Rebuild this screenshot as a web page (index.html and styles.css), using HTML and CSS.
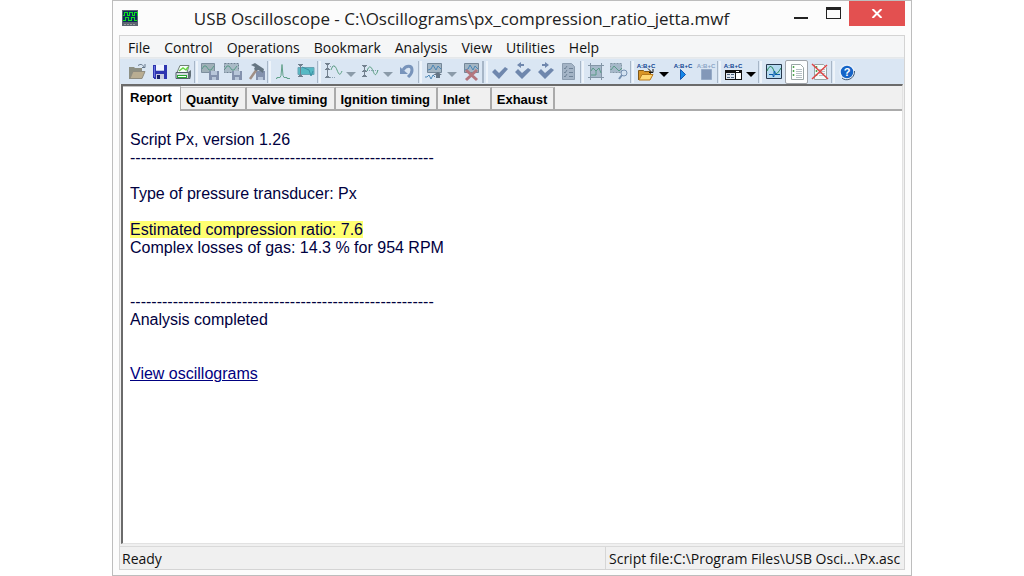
FILE: index.html
```html
<!DOCTYPE html>
<html lang="en">
<head>
<meta charset="utf-8">
<title>USB Oscilloscope</title>
<link rel="stylesheet" href="styles.css">
</head>
<body>
<div class="window">
  <header class="titlebar">
    <svg class="app-icon" width="16" height="16" viewBox="0 0 16 16" shape-rendering="crispEdges"><path fill="#5c6470" d="M0 0h16v16H0z"/><path fill="#0c2c58" d="M1 1h14v11H1z"/><path fill="none" stroke="#10e020" d="M1 5.500h1v-3h3v3h2v-3h3v3h2v-3h3v3M1 10.500h2v-3h3v3h3v-3h3v3h3"/><path stroke="#98a0a0" stroke-dasharray="2 1" d="M2 14.500h12"/></svg>
    <h1 class="title">USB Oscilloscope - C:\Oscillograms\px_compression_ratio_jetta.mwf</h1>
    <div class="controls">
      <button class="ctl" aria-label="Minimize"><svg width="14" height="12" viewBox="0 0 14 12"><path fill="#222" d="M0 10h14v2H0z"/></svg></button>
      <button class="ctl ctl-max" aria-label="Maximize"><svg width="15" height="12" viewBox="0 0 15 12"><path fill="#222" fill-rule="evenodd" d="M0 0h15v12H0zM1 3v8h13V3z"/></svg></button>
      <button class="ctl close" aria-label="Close"><svg width="12" height="9" viewBox="0 0 12 9"><path stroke="#fff" stroke-width="2" d="M1.500 0l9 9M10.500 0l-9 9"/></svg></button>
    </div>
  </header>
  <div class="client">
    <nav class="menu">
      <button>File</button><button>Control</button><button>Operations</button><button>Bookmark</button><button>Analysis</button><button>View</button><button>Utilities</button><button>Help</button>
    </nav>
    <div class="toolbar" role="toolbar">
      <button class="tool" aria-label="Open"><svg viewBox="0 0 18 20"><path fill="#8d8f83" d="M1 5h5l1 1h7v4H5l-3 7H1z"/><path fill="#b9ad92" stroke="#8f8c80" d="M5 9.500h12l-3 7H2z"/><path fill="none" stroke="#66788c" d="M10 3.500c3-2 5-1 6 2M14 5.500h3V2"/></svg></button>
      <button class="tool" aria-label="Save"><svg viewBox="0 0 18 20" shape-rendering="crispEdges"><path fill="#2d35b0" d="M2 3h14v14H3l-1-1z"/><path fill="#6874e0" d="M3 4h1v11H3z"/><path fill="#f0f4ff" d="M5 3h8v6H5z"/><path fill="#b8c4e8" d="M5 8h8v1H5z"/><path fill="#c8cce0" d="M5 12h8v5H5z"/><path fill="#16206c" d="M6 13h3v4H6z"/></svg></button>
      <button class="tool" aria-label="Print"><svg viewBox="0 0 18 20"><path fill="#f8fffa" stroke="#718078" d="M6 3.500h9l-2 7H3z"/><path stroke="#69d544" stroke-width="1.500" fill="none" d="M5 9l4-3 3 2 2-3"/><path fill="#d5dce0" stroke="#536068" d="M2 10.500h14v6H2z"/><path fill="#27a82f" d="M3 13h10v3H3z"/><path fill="#fff" d="M4 14h8v1H4z"/><path fill="#627078" d="M14 10l3-2v6l-2 3h-1z"/></svg></button>
      <span class="sep"></span>
      <button class="tool" aria-label="Save graph"><svg viewBox="0 0 18 20"><path fill="#9fb0b8" stroke="#7d8f9e" d="M.5 1.500h13v9H.5z"/><path fill="none" stroke="#5a9b88" d="M1 7l2-3h2l3 4h2l3-4"/><path fill="#8492ad" d="M8 9h10v9H8z"/><path fill="#b8c6d9" d="M10 9h6v4h-6zM11 15h4v3h-4z"/></svg></button>
      <button class="tool" aria-label="Save selection"><svg viewBox="0 0 18 20"><path fill="#a9bac6" stroke="#6e8090" stroke-dasharray="2 1" d="M.5 1.500h14v9H.5z"/><path fill="none" stroke="#5a9b88" d="M1 7l2-3h2l3 4h2l3-4"/><path fill="#8492ad" d="M8 9h10v9H8z"/><path fill="#b8c6d9" d="M10 9h6v4h-6zM11 15h4v3h-4z"/></svg></button>
      <button class="tool" aria-label="Build"><svg viewBox="0 0 18 20"><path fill="#8492ad" d="M9 9h9v9H9z"/><path fill="#b8c6d9" d="M11 15h5v3h-5z"/><path stroke="#a08f85" stroke-width="2.500" d="M10 7l-7 10"/><path fill="#657582" d="M4 3l4-2 9 6-1 4-3-2-2-1-2 1-2-2 1-2z"/></svg></button>
      <span class="sep"></span>
      <button class="tool" aria-label="Peak"><svg viewBox="0 0 18 20"><path fill="none" stroke="#63a28c" d="M2 16.500h1v-1h3l1-2 1-11 1 11 1 2h3v1h3"/></svg></button>
      <button class="tool" aria-label="Levels"><svg viewBox="0 0 18 20"><path fill="#56b9c4" stroke="#6aa3b4" d="M1 5.500h16v7H1z"/><path fill="none" stroke="#3b92a4" d="M5 5l7 3 2 6 2-5"/><path stroke="#70808e" d="M3.500 2v13M1 2.500h5M1 14.500h5M2 3.500h3M2 13.500h3"/></svg></button>
      <span class="sep"></span>
      <button class="tool" aria-label="Vertical zoom"><svg viewBox="0 0 18 20"><path stroke="#73818f" d="M3.500 1v15M1 1.500h5M1 7.500h5M1 15.500h5M2 2.500h3M2 6.500h3M2 14.500h3"/><path stroke="#8ba2b3" stroke-dasharray="1 1" d="M6 4.500h5M6 15.500h5"/><path fill="none" stroke="#5ba083" d="M7 8c2-6 4-5 6 0s3 6 5 1"/></svg></button>
      <button class="drop" aria-label="Vertical zoom options"></button>
      <button class="tool" aria-label="Offset"><svg viewBox="0 0 18 20"><path stroke="#73818f" d="M3.500 3v12M1 3.500h5M1 9.500h5M1 14.500h5M2 4.500h3M2 8.500h3M2 13.500h3"/><path stroke="#8ba2b3" stroke-dasharray="1 1" d="M6 8.500h12"/><path fill="none" stroke="#5ba083" d="M6 9c2-6 4-5 6 0s3 5 5-1"/></svg></button>
      <button class="drop" aria-label="Offset options"></button>
      <button class="tool" aria-label="Undo"><svg viewBox="0 0 18 20"><path fill="none" stroke="#7894bb" stroke-width="3" d="M5 8c3-5 9-5 9 0 0 4-2 5-4 7"/><path fill="#7894bb" d="M2 5v7h8z"/></svg></button>
      <span class="sep"></span>
      <button class="tool" aria-label="Add marker"><svg viewBox="0 0 18 20"><path fill="#a3b5c3" stroke="#748798" d="M2.500 1.500h14v9h-14z"/><path fill="none" stroke="#4b86b5" d="M3 8l3-1 2-4 3 5 2-4 3 3M0 15h2l2-2 2 4 2-4 2 2"/><path fill="#647484" d="M8 13l5-3 4 3h-2v3h-4v-3z"/></svg></button>
      <button class="drop" aria-label="Marker options"></button>
      <button class="tool" aria-label="Delete marker"><svg viewBox="0 0 18 20"><path fill="#a3b5c3" stroke="#748798" d="M2.500 1.500h14v9h-14z"/><path fill="none" stroke="#4b86b5" d="M3 8l3-1 2-4 3 5 2-4 3 3"/><path stroke="#b3767e" stroke-width="3" d="M4 8l11 10M15 8L4 18"/></svg></button>
      <span class="sep band"></span>
      <button class="tool" aria-label="Check"><svg viewBox="0 0 18 20"><path fill="#6f87ad" d="M1 10l3-3 4 4 6-6 3 2-9 10z"/></svg></button>
      <button class="tool" aria-label="Previous check"><svg viewBox="0 0 18 20"><path fill="#6f87ad" d="M1 10l3-3 4 4 6-5 3 2-9 9zM3 3l4-3v2h3v2H7v2z"/></svg></button>
      <button class="tool" aria-label="Next check"><svg viewBox="0 0 18 20"><path fill="#6f87ad" d="M1 10l3-3 4 4 6-5 3 2-9 9zM12 3L8 0v2H5v2h3v2z"/></svg></button>
      <button class="tool" aria-label="Check list"><svg viewBox="0 0 18 20"><path fill="#a4b4c6" stroke="#8c9db0" d="M2.500 1.500h9l3 3v13h-12z"/><path fill="none" stroke="#6f8398" d="M4 6l1 1 2-3M4 10l1 1 2-3M4 14l1 1 2-3M9 6.500h4M9 10.500h4M9 14.500h4"/></svg></button>
      <span class="sep"></span>
      <button class="tool" aria-label="Fit view"><svg viewBox="0 0 18 20"><path fill="#a5b8c9" stroke="#8396a7" d="M3.500 3.500h11v12h-11z"/><path stroke="#8396a7" fill="none" d="M1 3.500h16M1 15.500h16M3.500 1v17M14.500 1v17"/><path fill="none" stroke="#5a9b88" d="M4 9l2-3 3 3 3-3 2 5M4 13h5V9"/></svg></button>
      <button class="tool" aria-label="Find"><svg viewBox="0 0 18 20"><path fill="#a5b8c9" stroke="#8396a7" stroke-dasharray="2 1" d="M.5 1.500h11v9H.5z"/><path fill="none" stroke="#5a9b88" d="M1 8l3-4 3 3 2 2 3-3"/><circle cx="14" cy="11" r="3" fill="#d3e2f1" stroke="#7690b0"/><path stroke="#7690b0" stroke-width="2" d="M12 13l-3 4"/></svg></button>
      <span class="sep"></span>
      <button class="tool" aria-label="Open script"><svg viewBox="0 0 18 20"><text class="abc" x="9" y="6" text-anchor="middle">A:B+C</text><path fill="#d99526" stroke="#805818" d="M1.500 18V8.500h5l1 1h6v3"/><path fill="#ffd875" stroke="#b8791c" d="M5 12.500h11l-3 5.500H2z"/><path fill="none" stroke="#111" d="M11 6.500l4 4M12 10.500h4V7"/></svg></button>
      <button class="drop dark" aria-label="Open script options"></button>
      <button class="tool" aria-label="Run script"><svg viewBox="0 0 18 20"><text class="abc" x="9" y="6" text-anchor="middle">A:B+C</text><path fill="#1587e8" stroke="#1558b0" d="M6.500 7.500v10l5-5z"/></svg></button>
      <button class="tool" aria-label="Stop script"><svg viewBox="0 0 18 20"><text class="abc off" x="9" y="6" text-anchor="middle">A:B+C</text><path fill="#8398b8" stroke="#96abc7" d="M4.500 7.500h10v10h-10z"/></svg></button>
      <span class="sep"></span>
      <button class="tool" aria-label="Script window"><svg viewBox="0 0 18 20"><text class="abc" x="9" y="6" text-anchor="middle">A:B+C</text><g shape-rendering="crispEdges"><path fill="#111" d="M1 8h17v10H1z"/><path fill="#dfe6ee" d="M2 11h9v6H2z"/><path fill="#fff" d="M12 11h5v6h-5z"/><path fill="#4d6480" d="M3 12h3v1H3zM7 12h3v1H7zM3 15h3v1H3zM7 15h3v1H7z"/><path fill="#fff" d="M12 9h3v1h-3z"/></g></svg></button>
      <button class="drop dark" aria-label="Script window options"></button>
      <span class="sep"></span>
      <button class="tool" aria-label="Oscillogram"><svg viewBox="0 0 18 20"><path fill="#b5daf0" stroke="#26374d" d="M1.500 2.500h15v14h-15z"/><path fill="none" stroke="#238653" d="M2 9c3-7 5-5 7 0s4 2 7-3"/><path fill="none" stroke="#075cad" d="M4 12.500h4v2h1v-5h1v3h5"/></svg></button>
      <button class="tool pressed" aria-label="Report" aria-pressed="true"><svg viewBox="0 0 18 20"><path fill="#fff" stroke="#9aa6a6" d="M3.500 2.500h9l3 3v12h-12z"/><path stroke="#4fa650" stroke-width="1.500" stroke-dasharray="2 2" d="M5.500 4v12"/><path stroke="#b7c1c5" d="M8 7.500h6M8 9.500h6M8 11.500h6M8 13.500h6M8 15.500h6"/></svg></button>
      <button class="tool" aria-label="Delete report"><svg viewBox="0 0 18 20"><path fill="#f5fafa" stroke="#9aa6a6" d="M3.500 2.500h9l3 3v12h-12z"/><path stroke="#4fa650" stroke-width="1.500" stroke-dasharray="2 2" d="M5.500 4v12"/><path stroke="#b7c1c5" d="M8 7.500h6M8 9.500h6M8 11.500h6M8 13.500h6"/><path stroke="#df4545" stroke-width="1.500" d="M1 2l16 15M16 3L1 17"/></svg></button>
      <span class="sep"></span>
      <button class="tool" aria-label="Help"><svg viewBox="0 0 18 20"><circle cx="9" cy="10" r="7" fill="#1564c7" stroke="#e9f1fa" stroke-width="1.500"/><path fill="none" stroke="#3c5876" d="M4 16c4 4 13 1 12.500-7"/><text class="question" x="9" y="14" text-anchor="middle">?</text></svg></button>
    </div>
    <main class="pane">
      <div class="tabs" role="tablist">
        <button class="tab active" role="tab" aria-selected="true">Report</button>
        <button class="tab" role="tab">Quantity</button>
        <button class="tab" role="tab">Valve timing</button>
        <button class="tab" role="tab">Ignition timing</button>
        <button class="tab inlet" role="tab">Inlet</button>
        <button class="tab" role="tab">Exhaust</button>
      </div>
      <div class="report">
        <p>Script Px, version 1.26</p>
        <p>---------------------------------------------------------</p>
        <p class="gap">Type of pressure transducer: Px</p>
        <p class="gap"><mark>Estimated compression ratio: 7.6</mark></p>
        <p>Complex losses of gas: 14.3 % for 954 RPM</p>
        <p class="gap-wide">---------------------------------------------------------</p>
        <p>Analysis completed</p>
        <p class="gap-wide"><a href="#">View oscillograms</a></p>
      </div>
    </main>
    <footer class="status">
      <span class="ready">Ready</span>
      <span class="script">Script file:C:\Program Files\USB Osci...\Px.asc</span>
    </footer>
  </div>
</div>
</body>
</html>
```
FILE: styles.css
```css
* { box-sizing: border-box; }
body { margin: 0; background: #fff; font-family: "Open Sans", "Noto Sans", sans-serif; color: #111; }
button { border: 0; padding: 0; background: none; font: inherit; color: inherit; }
.window { display: flex; flex-direction: column; height: 100vh; margin: 0 112px; padding: 0 6px 5px; border: 1px solid #bdbdbd; background: #fcfcfc; }
.titlebar { display: flex; height: 34px; padding-left: 3px; }
.app-icon { flex: none; margin-top: 9px; }
.title { flex: 1; margin: 0; padding-top: 6px; text-align: center; font-size: 17px; line-height: 24px; font-weight: 400; color: #222; white-space: nowrap; }
.controls { display: flex; align-items: flex-start; }
.ctl { display: flex; justify-content: center; width: 32px; height: 25px; padding-top: 6px; }
.ctl-max { width: 32px; }
.close { width: 56px; align-items: center; padding: 0; background: #e35050; }
.client { flex: 1; min-height: 0; display: flex; flex-direction: column; border: 1px solid #d4d4d4; background: #f0f0f0; }
.menu { display: flex; gap: 14px; height: 22px; padding-left: 8px; background: #f5f6f7; border-bottom: 1px solid #e5e8ea; font-size: 14px; line-height: 24px; }
.toolbar { display: flex; align-items: center; height: 26px; padding-left: 5px; background: #dae6f3; border-top: 1px solid #e6eaef; }
.tool { display: flex; align-items: center; justify-content: center; flex: none; width: 23px; height: 24px; }
.tool svg { width: 18px; height: 20px; flex: none; overflow: visible; }
.pressed { background: #fcfdfe; border: 1px solid #a0a5ab; border-radius: 2px; }
.sep { flex: none; width: 4px; height: 22px; border-left: 1px solid #a7b6c7; border-right: 2px solid #eef4fa; }
.band { width: 6px; border-left-width: 2px; }
.drop { flex: none; display: flex; justify-content: center; width: 14px; }
.drop::after { content: ""; margin-top: 5px; border: 5px solid transparent; border-top-color: #8b9ba9; border-bottom: 0; }
.dark::after { border-top-color: #000; }
.abc { font: bold 6px "Liberation Sans", sans-serif; fill: #0c3f90; }
.off { fill: #8ba4c5; }
.question { font: bold 11px "Liberation Sans", sans-serif; fill: #fff; }
.pane { flex: 1; min-height: 0; display: flex; flex-direction: column; border: 2px solid #6b6b6b; border-right: 1px solid #e2e2e2; border-bottom: 1px solid #e2e2e2; background: #fff; margin: 0 1px; }
.tabs { display: flex; align-items: flex-end; height: 25px; flex: none; background: #f0f0f0; border-bottom: 2px solid #ababab; font: bold 13px "Liberation Sans", sans-serif; color: #000; }
.tab { height: 22px; padding: 1px 6px 0 5px; border: 1px solid #c4c4c4; border-right: 2px solid #aaa; border-left: 0; border-bottom: 0; white-space: nowrap; }
.active { height: 25px; margin-bottom: -2px; padding: 0 8px 3px 7px; background: #fff; border-right-width: 1px; }
.inlet { padding-right: 20px; }
.report { flex: 1; padding: 20px 7px; font: 16px/18px "Liberation Sans", sans-serif; color: #000040; }
.report p { margin: 0; }
.report .gap { margin-top: 18px; }
.report .gap-wide { margin-top: 36px; }
.report mark { background: #ffff70; color: inherit; }
.report a { color: #000080; }
.status { display: flex; height: 23px; flex: none; margin-top: 2px; border-top: 1px solid #dadada; font-size: 14px; line-height: 23px; white-space: nowrap; }
.ready { flex: 1; padding-left: 2px; }
.script { width: 299px; padding-left: 3px; border-left: 1px solid #d6d6d6; }
```
